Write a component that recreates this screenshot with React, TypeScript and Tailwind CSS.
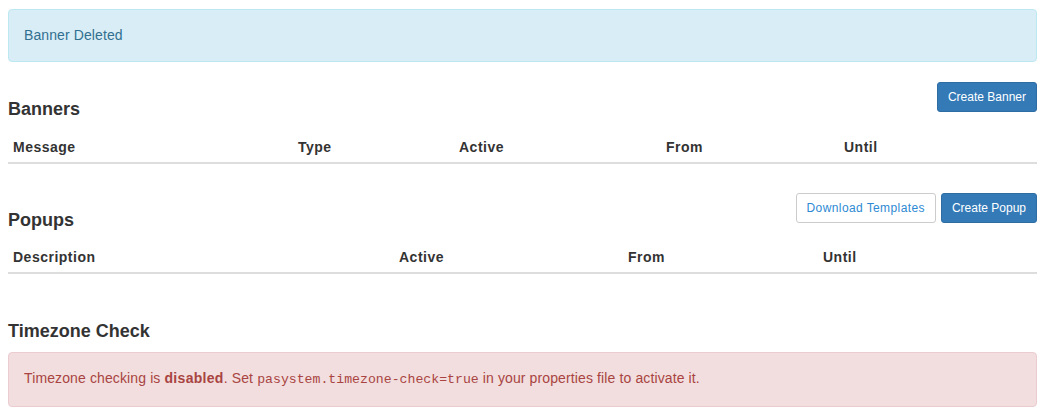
export default function App() {
  return (
    <div className="min-h-screen bg-white pt-[9px] pr-1 pl-2 font-['Liberation_Sans',Arial,sans-serif] text-[14px] leading-5 text-[#333]">
      <div className="rounded border border-[#bce8f1] bg-[#d9edf7] px-[15px] pt-[15px] pb-[16px] tracking-[0.1px] text-[#31708f]">
        Banner Deleted
      </div>

      <section className="mt-5">
        <div className="flex items-start justify-between">
          <h4 className="mt-[17px] text-[18px] font-bold leading-5">Banners</h4>
          <button className="h-[30px] rounded-[3px] border border-[#2e6da4] bg-[#337ab7] px-[10px] text-[12px] text-white">
            Create Banner
          </button>
        </div>
        <table className="mt-[13px] w-full border-collapse text-left tracking-[0.5px]">
          <thead>
            <tr className="border-b-2 border-[#ddd]">
              <th className="w-[285px] p-[5px] font-bold">Message</th>
              <th className="w-[161px] p-[5px] font-bold">Type</th>
              <th className="w-[207px] p-[5px] font-bold">Active</th>
              <th className="w-[178px] p-[5px] font-bold">From</th>
              <th className="p-[5px] font-bold">Until</th>
            </tr>
          </thead>
        </table>
      </section>

      <section className="mt-[29px]">
        <div className="flex items-start justify-between">
          <h4 className="mt-[17px] text-[18px] font-bold leading-5">Popups</h4>
          <div className="flex gap-[5px]">
            <button className="h-[30px] rounded-[3px] border border-[#ccc] bg-white px-[10px] text-[12px] tracking-[0.4px] text-[#2d8ad3]">
              Download Templates
            </button>
            <button className="h-[30px] rounded-[3px] border border-[#2e6da4] bg-[#337ab7] px-[10px] text-[12px] text-white">
              Create Popup
            </button>
          </div>
        </div>
        <table className="mt-[12px] w-full border-collapse text-left tracking-[0.5px]">
          <thead>
            <tr className="border-b-2 border-[#ddd]">
              <th className="w-[386px] p-[5px] font-bold">Description</th>
              <th className="w-[229px] p-[5px] font-bold">Active</th>
              <th className="w-[195px] p-[5px] font-bold">From</th>
              <th className="p-[5px] font-bold">Until</th>
            </tr>
          </thead>
        </table>
      </section>

      <section className="mt-[47px]">
        <h4 className="text-[18px] font-bold leading-5">Timezone Check</h4>
        <div className="mt-[11px] rounded border border-[#ebccd1] bg-[#f2dede] px-[15px] pt-[15px] pb-[16px] tracking-[0.12px] text-[#a94442]">
          Timezone checking is <strong className="tracking-[0.3px]">disabled</strong>. Set{" "}
          <code className="font-['Liberation_Mono','Courier_New',monospace] text-[13.2px] tracking-normal">
            pasystem.timezone-check=true
          </code>{" "}
          in your properties file to activate it.
        </div>
      </section>
    </div>
  );
}
